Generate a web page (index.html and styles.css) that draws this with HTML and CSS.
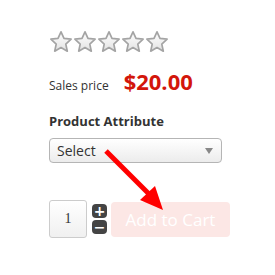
FILE: index.html
```html
<!DOCTYPE html>
<html lang="en">
<head>
  <meta charset="UTF-8">
  <title>Product</title>
  <link rel="stylesheet" href="styles.css">
</head>
<body>
  <div class="product">
    <div class="stars">
      <svg class="star" viewBox="0 0 24 24"><defs><linearGradient id="sg" x1="0" y1="0" x2="0" y2="1"><stop offset="0" stop-color="#ffffff"/><stop offset="1" stop-color="#e2e2e2"/></linearGradient></defs><path d="M12 1.8l3 6.6 7.1.8-5.3 4.9 1.5 7.1L12 17.6l-6.3 3.6 1.5-7.1L1.9 9.2 9 8.4z" fill="url(#sg)" stroke="#a4a4a4" stroke-width="1.7" stroke-linejoin="round"/></svg>
      <svg class="star" viewBox="0 0 24 24"><path d="M12 1.8l3 6.6 7.1.8-5.3 4.9 1.5 7.1L12 17.6l-6.3 3.6 1.5-7.1L1.9 9.2 9 8.4z" fill="url(#sg)" stroke="#a4a4a4" stroke-width="1.7" stroke-linejoin="round"/></svg>
      <svg class="star" viewBox="0 0 24 24"><path d="M12 1.8l3 6.6 7.1.8-5.3 4.9 1.5 7.1L12 17.6l-6.3 3.6 1.5-7.1L1.9 9.2 9 8.4z" fill="url(#sg)" stroke="#a4a4a4" stroke-width="1.7" stroke-linejoin="round"/></svg>
      <svg class="star" viewBox="0 0 24 24"><path d="M12 1.8l3 6.6 7.1.8-5.3 4.9 1.5 7.1L12 17.6l-6.3 3.6 1.5-7.1L1.9 9.2 9 8.4z" fill="url(#sg)" stroke="#a4a4a4" stroke-width="1.7" stroke-linejoin="round"/></svg>
      <svg class="star" viewBox="0 0 24 24"><path d="M12 1.8l3 6.6 7.1.8-5.3 4.9 1.5 7.1L12 17.6l-6.3 3.6 1.5-7.1L1.9 9.2 9 8.4z" fill="url(#sg)" stroke="#a4a4a4" stroke-width="1.7" stroke-linejoin="round"/></svg>
    </div>

    <div class="price-row">
      <span class="price-label">Sales price</span>
      <span class="price">$20.00</span>
    </div>

    <div class="attr-title">Product Attribute</div>
    <div class="select">
      <span>Select</span>
      <span class="caret"></span>
    </div>

    <div class="cart-row">
      <div class="qty">1</div>
      <div class="qty-btns">
        <span class="qbtn">+</span>
        <span class="qbtn">&minus;</span>
      </div>
      <div class="add-btn">Add to Cart</div>
    </div>
  </div>

  <!-- seta vermelha por cima -->
  <svg class="arrow" width="275" height="275" viewBox="0 0 275 275">
    <line x1="106" y1="151" x2="149" y2="194" stroke="#ff0000" stroke-width="5"/>
    <polygon points="163,210 140,200 155,186" fill="#ff0000"/>
  </svg>
</body>
</html>
```

FILE: styles.css
```css
body {
  margin: 0;
  background: #fff;
  font-family: 'Open Sans', sans-serif;
  color: #333;
  position: relative;
  width: 275px;
  height: 275px;
  overflow: hidden;
}

.product {
  padding: 30px 0 0 49px;
}

.stars {
  display: flex;
  gap: 0;
}

.star {
  width: 24px;
  height: 24px;
}

.price-row {
  display: flex;
  align-items: baseline;
  margin-top: 12px;
}

.price-label {
  font-size: 12px;
}

.price {
  margin-left: 15px;
  font-size: 22px;
  font-weight: bold;
  color: #d3160b;
}

.attr-title {
  margin-top: 16px;
  font-size: 13px;
  font-weight: bold;
  color: #333;
}

.select {
  margin-top: 8px;
  height: 23px;
  border: 1px solid #b5b5b5;
  border-radius: 4px;
  background: linear-gradient(#ffffff, #ececec);
  display: flex;
  align-items: center;
  justify-content: space-between;
  padding: 0 8px 0 7px;
  box-sizing: content-box;
  width: 156px;
  font-size: 14px;
  color: #333;
}

.caret {
  width: 0;
  height: 0;
  border-left: 4px solid transparent;
  border-right: 4px solid transparent;
  border-top: 6px solid #888;
}

.cart-row {
  display: flex;
  align-items: center;
  margin-top: 37px;
}

.qty {
  width: 36px;
  height: 36px;
  border: 1px solid #ccc;
  border-radius: 3px;
  background: linear-gradient(#ffffff, #f0f0f0);
  display: flex;
  align-items: center;
  justify-content: center;
  font-family: 'Liberation Serif', serif;
  font-size: 14px;
}

.qty-btns {
  display: flex;
  flex-direction: column;
  gap: 2px;
  margin-left: 5px;
}

.qbtn {
  width: 15px;
  height: 14px;
  border-radius: 4px;
  background: #444;
  color: #fff;
  font-size: 14px;
  font-weight: bold;
  line-height: 14px;
  text-align: center;
  font-family: 'DejaVu Sans', sans-serif;
}

.add-btn {
  margin-left: 4px;
  width: 119px;
  height: 35px;
  border-radius: 4px;
  background: #fce7e5;
  color: #fff;
  font-size: 17px;
  display: flex;
  align-items: center;
  justify-content: center;
}

.arrow {
  position: absolute;
  left: 0;
  top: 0;
}
```
